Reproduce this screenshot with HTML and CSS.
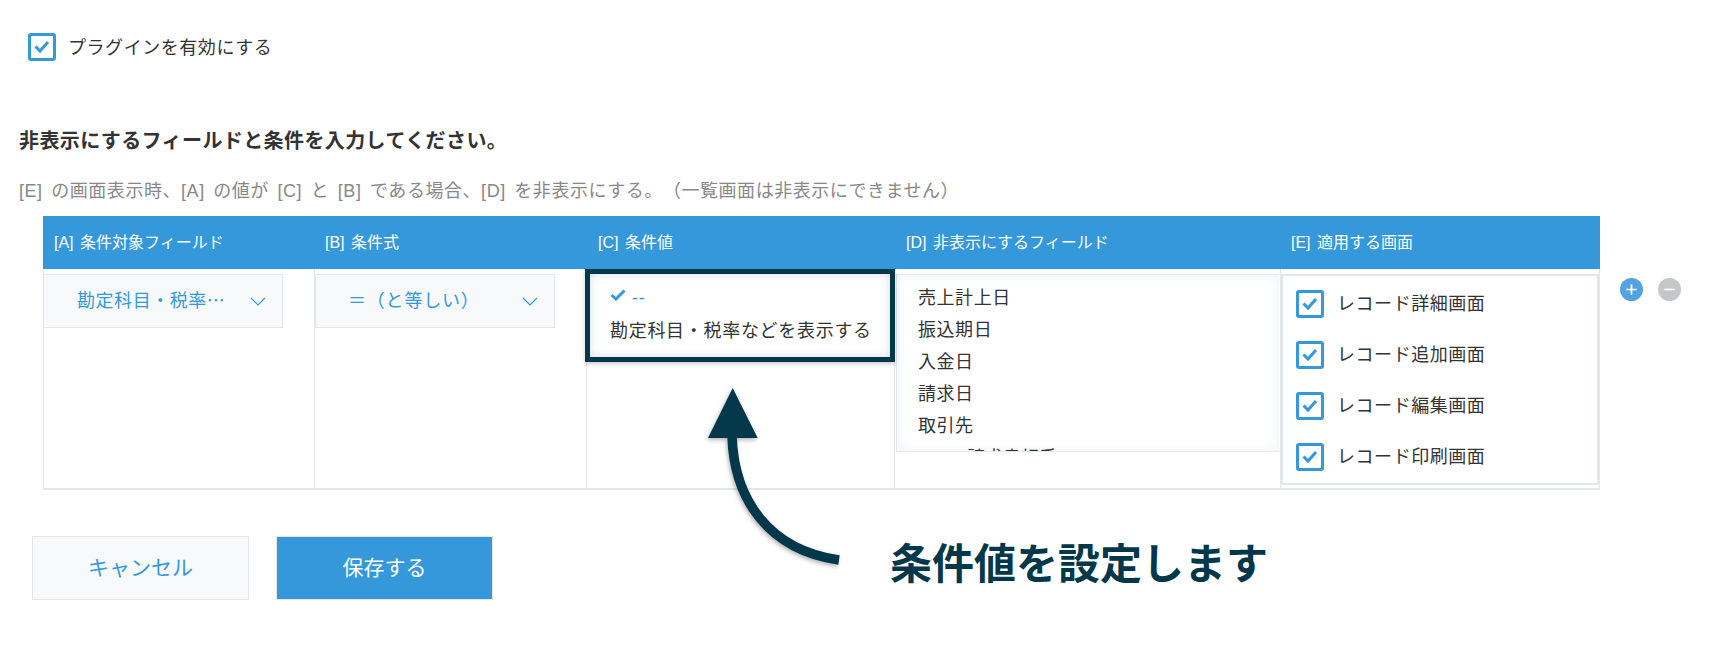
FILE: index.html
```html
<!DOCTYPE html>
<html lang="ja">
<head>
<meta charset="utf-8">
<title>プラグイン設定</title>
<link rel="stylesheet" href="styles.css">
</head>
<body>
<main class="page">
  <label class="enable">
    <span class="checkbox"><svg viewBox="0 0 28 28"><path d="M7.500 13.500l4.500 4.500 8-9"/></svg></span>
    <span class="enable-text">プラグインを有効にする</span>
  </label>
  <h1 class="heading">非表示にするフィールドと条件を入力してください。</h1>
  <p class="desc">[E] の画面表示時、[A] の値が [C] と [B] である場合、[D] を非表示にする。（一覧画面は非表示にできません）</p>

  <div class="table-row">
    <div class="table">
      <div class="head">
        <div class="th">[A] 条件対象フィールド</div>
        <div class="th">[B] 条件式</div>
        <div class="th">[C] 条件値</div>
        <div class="th">[D] 非表示にするフィールド</div>
        <div class="th">[E] 適用する画面</div>
      </div>
      <div class="body">
        <div class="cell cell-a">
          <div class="select select-a"><span class="select-text">勘定科目・税率…</span><svg class="chev" viewBox="0 0 16 9"><path d="M1 1l7 7 7-7"/></svg></div>
        </div>
        <div class="cell">
          <div class="select select-b"><span class="select-text">＝（と等しい）</span><svg class="chev" viewBox="0 0 16 9"><path d="M1 1l7 7 7-7"/></svg></div>
        </div>
        <div class="cell">
          <div class="highlight">
            <div class="opt opt-sel"><svg class="tick" viewBox="0 0 16 12"><path d="M1.500 6l4.500 4 8.500-8.500"/></svg><span class="dashes">--</span></div>
            <div class="opt">勘定科目・税率などを表示する</div>
          </div>
        </div>
        <div class="cell">
          <div class="fields">
            <div class="opt">売上計上日</div>
            <div class="opt">振込期日</div>
            <div class="opt">入金日</div>
            <div class="opt">請求日</div>
            <div class="opt">取引先</div>
            <div class="opt opt-clipped">Acme 請求書相手</div>
          </div>
        </div>
        <div class="cell cell-e">
          <div class="screens">
            <label class="screen"><span class="checkbox"><svg viewBox="0 0 28 28"><path d="M7.500 13.500l4.500 4.500 8-9"/></svg></span><span>レコード詳細画面</span></label>
            <label class="screen"><span class="checkbox"><svg viewBox="0 0 28 28"><path d="M7.500 13.500l4.500 4.500 8-9"/></svg></span><span>レコード追加画面</span></label>
            <label class="screen"><span class="checkbox"><svg viewBox="0 0 28 28"><path d="M7.500 13.500l4.500 4.500 8-9"/></svg></span><span>レコード編集画面</span></label>
            <label class="screen"><span class="checkbox"><svg viewBox="0 0 28 28"><path d="M7.500 13.500l4.500 4.500 8-9"/></svg></span><span>レコード印刷画面</span></label>
          </div>
        </div>
      </div>
    </div>
    <div class="row-actions">
      <svg class="round round-add" viewBox="0 0 24 24"><circle cx="12" cy="12" r="12"/><path d="M12 6.500v11M6.500 12h11"/></svg>
      <svg class="round round-remove" viewBox="0 0 24 24"><circle cx="12" cy="12" r="12"/><path d="M6.500 12h11"/></svg>
    </div>
  </div>

  <div class="buttons">
    <button class="btn btn-cancel">キャンセル</button>
    <button class="btn btn-save">保存する</button>
  </div>

  <svg class="arrow" viewBox="0 0 160 190">
    <path class="arrow-stem" d="M26 48C28 112 63 162 133 172"/>
    <path class="arrow-head" d="M26.700 0L51.700 50H2z"/>
  </svg>
  <div class="callout">条件値を設定します</div>
</main>
</body>
</html>
```

FILE: styles.css
```css
* { box-sizing: border-box; }
html, body { margin: 0; padding: 0; background: #fff; }
body {
  font-family: "Liberation Sans", "Noto Sans CJK JP", sans-serif;
  color: #333;
  font-size: 18px;
  letter-spacing: .55px;
  text-spacing-trim: space-all;
}
.page {
  position: relative;
  width: 1714px;
  height: 654px;
  overflow: hidden;
  padding-top: 33px;
}
.enable {
  display: flex;
  align-items: center;
  gap: 12px;
  margin-left: 28px;
  height: 28px;
  line-height: 28px;
}
.enable-text { padding-top: 2px; }
.checkbox {
  flex: none;
  display: block;
  width: 28px;
  height: 28px;
  border: 3px solid #3498db;
  border-radius: 3px;
  background: #fff;
}
.checkbox svg {
  display: block;
  width: 28px;
  height: 28px;
  margin: -3px;
}
.checkbox path {
  fill: none;
  stroke: #3498db;
  stroke-width: 3;
}
.heading {
  margin: 66px 0 0 19px;
  font-size: 20px;
  line-height: 28px;
  font-weight: 700;
  letter-spacing: .4px;
}
.desc {
  margin: 22px 0 0 19px;
  line-height: 28px;
  color: #888;
  letter-spacing: .55px;
  word-spacing: 3px;
}
.table-row {
  display: flex;
  align-items: flex-start;
  margin: 11px 0 0 43px;
}
.table { width: 1557px; flex: none; }
.head, .body {
  display: grid;
  grid-template-columns: 271px 272px 308px 386px 320px;
}
.head {
  height: 53px;
  background: #3498db;
  color: #fff;
  font-size: 16px;
  line-height: 53px;
  letter-spacing: 0;
  word-spacing: 2px;
}
.th { padding-left: 11px; }
.th:nth-child(3) { padding-left: 12px; }
.th:nth-child(4) { padding-left: 12px; }
.body {
  height: 221px;
  border-bottom: 2px solid #e3e7e8;
}
.cell {
  border-left: 1px solid #e3e7e8;
  min-width: 0;
}
.cell-e { border-right: 1px solid #e3e7e8; }
.select {
  display: flex;
  align-items: center;
  justify-content: space-between;
  width: 240px;
  height: 54px;
  margin-top: 5px;
  background: #f7f9fa;
  border: 1px solid #e3e7e8;
  color: #3498db;
  padding-right: 16px;
}
.select-text {
  font-family: "Noto Sans CJK JP", sans-serif;
  padding-bottom: 4px;
}
.select-a { margin-left: -1px; padding-left: 33px; }
.select-b { padding-left: 32px; letter-spacing: .8px; }
.chev { width: 16px; height: 9px; }
.chev path { fill: none; stroke: #3498db; stroke-width: 1.200; }
.highlight {
  position: relative;
  z-index: 1;
  width: 310px;
  height: 93px;
  margin-left: -2px;
  padding: 8px 0 0 20px;
  background: #fff;
  border: 5px solid #03374a;
  letter-spacing: .7px;
  box-shadow: inset 0 0 8px rgba(120, 135, 145, .3), 0 2px 4px rgba(0, 0, 0, .2);
}
.opt {
  height: 32px;
  line-height: 32px;
  white-space: nowrap;
}
.opt-clipped { letter-spacing: 0; word-spacing: -2px; }
.opt-sel {
  display: flex;
  align-items: center;
  gap: 6px;
  color: #3498db;
  height: 28px;
  line-height: 28px;
  margin-bottom: 5px;
}
.dashes { padding-top: 3px; }
.tick { width: 16px; height: 12px; margin-bottom: 3px; }
.tick path { fill: none; stroke: #3498db; stroke-width: 3; }
.fields {
  height: 178px;
  margin: 5px 1px 0 1px;
  padding: 7px 0 0 21px;
  overflow: hidden;
  background: #fff;
  border-top: 1px solid #e3e7e8;
  border-bottom: 1px solid #e3e7e8;
  border-left: 1px solid #e3e7e8;
  box-shadow: inset 0 0 12px #eef1f4;
}
.screens {
  height: 211px;
  margin-top: 5px;
  padding-top: 14px;
  border: 2px solid #e3e7e8;
  background: #fff;
}
.screen {
  display: flex;
  align-items: center;
  gap: 13px;
  height: 28px;
  margin: 0 0 23px 13px;
  line-height: 28px;
}
.row-actions {
  display: flex;
  gap: 15px;
  margin: 62px 0 0 20px;
}
.round { width: 23px; height: 23px; display: block; }
.round path { fill: none; stroke: #fff; stroke-width: 1.800; }
.round-add circle { fill: #52a3e0; }
.round-remove circle { fill: #c4c7c7; }
.buttons {
  display: flex;
  gap: 27px;
  margin: 46px 0 0 32px;
}
.btn {
  width: 217px;
  height: 64px;
  font: inherit;
  font-size: 21px;
  letter-spacing: 0;
  border: 1px solid #e3e7e8;
  padding: 0 0 5px;
}
.btn-cancel { background: #f7f9fa; color: #3498db; }
.btn-save { background: #3498db; color: #fff; }
.arrow {
  position: absolute;
  left: 706px;
  top: 388px;
  width: 160px;
  height: 190px;
  overflow: visible;
  filter: drop-shadow(-1px 2px 2px rgba(0, 0, 0, .3));
}
.arrow-stem { fill: none; stroke: #03374a; stroke-width: 9.500; }
.arrow-head { fill: #03374a; }
.callout {
  position: absolute;
  left: 890px;
  top: 535px;
  font-size: 42px;
  line-height: 60px;
  font-weight: 700;
  letter-spacing: 0;
  color: #03374a;
  white-space: nowrap;
}
```
